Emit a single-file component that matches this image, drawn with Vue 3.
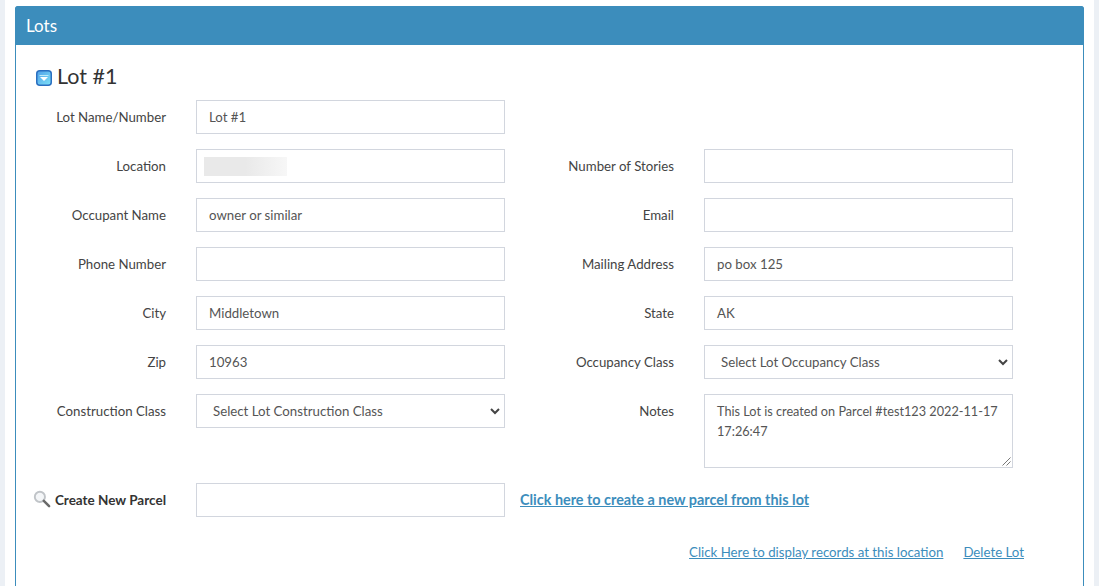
<script setup>
const rows = [
  { left: { label: 'Lot Name/Number', value: 'Lot #1' } },
  { left: { label: 'Location', blur: true }, right: { label: 'Number of Stories', value: '' } },
  { left: { label: 'Occupant Name', value: 'owner or similar' }, right: { label: 'Email', value: '' } },
  { left: { label: 'Phone Number', value: '' }, right: { label: 'Mailing Address', value: 'po box 125' } },
  { left: { label: 'City', value: 'Middletown' }, right: { label: 'State', value: 'AK' } },
  { left: { label: 'Zip', value: '10963' }, right: { label: 'Occupancy Class', select: 'Select Lot Occupancy Class' } },
]
</script>

<template>
  <div class="page">
    <section class="panel">
      <header class="panel-head">Lots</header>
      <div class="panel-body">
        <h2 class="lot-title">
          <svg class="toggle" width="16" height="16" viewBox="0 0 16 16" aria-hidden="true">
            <defs>
              <linearGradient id="tg" x1="0" y1="0" x2="1" y2="1">
                <stop offset="0" stop-color="#4f9fe8" />
                <stop offset="1" stop-color="#7fe3f7" />
              </linearGradient>
            </defs>
            <rect x="0.75" y="0.75" width="14.5" height="14.5" rx="3" fill="url(#tg)" stroke="#2a6fc0" stroke-width="1.5" />
            <path d="M3.5 5.5h9" stroke="#bfeaf8" stroke-width="1" />
            <path d="M4 7h8L8 11z" fill="#fff" />
          </svg>
          <span class="title-text">Lot #1</span>
        </h2>
        <div class="form-grid">
          <template v-for="(row, i) in rows" :key="i">
            <label class="lbl">{{ row.left.label }}</label>
            <div class="box">
              <span v-if="row.left.blur" class="blur"></span>
              <template v-else>{{ row.left.value }}</template>
            </div>
            <template v-if="row.right">
              <label class="lbl">{{ row.right.label }}</label>
              <div v-if="row.right.select" class="box sel">
                {{ row.right.select }}
                <svg class="chev" width="10" height="7" viewBox="0 0 10 7"><path d="M1 1l4 4 4-4" fill="none" stroke="#444" stroke-width="2" /></svg>
              </div>
              <div v-else class="box">{{ row.right.value }}</div>
            </template>
            <template v-else><span></span><span></span></template>
          </template>

          <label class="lbl">Construction Class</label>
          <div class="box sel">
            Select Lot Construction Class
            <svg class="chev" width="10" height="7" viewBox="0 0 10 7"><path d="M1 1l4 4 4-4" fill="none" stroke="#444" stroke-width="2" /></svg>
          </div>
          <label class="lbl lbl-top">Notes</label>
          <div class="box notes">
            This Lot is created on Parcel #test123 2022-11-17 17:26:47
            <svg class="grip" width="9" height="9" viewBox="0 0 9 9"><path d="M0.5 8.5l8-8M4.5 8.5l4-4" stroke="#555" stroke-width="0.8" fill="none" /></svg>
          </div>

          <label class="lbl strong">
            <svg class="mag" width="18" height="18" viewBox="0 0 17 17" aria-hidden="true">
              <circle cx="6.5" cy="6.5" r="4.8" fill="#f4f6f8" stroke="#c0c4c8" stroke-width="1.8" />
              <path d="M10.2 10.2l5 5" stroke="#6a6a6a" stroke-width="2.4" stroke-linecap="round" />
            </svg>
            Create New Parcel
          </label>
          <div class="box"></div>
          <a class="create-link" href="#">Click here to create a new parcel from this lot</a>
        </div>
        <div class="actions">
          <a href="#">Click Here to display records at this location</a>
          <a href="#">Delete Lot</a>
        </div>
      </div>
    </section>
  </div>
</template>

<style scoped>
.page {
  box-sizing: border-box;
  height: 586px;
  overflow: hidden;
  margin: 0 5px;
  padding: 6px 10px 0;
  background: #fff;
  font-family: Lato, "Noto Sans", sans-serif;
  font-size: 13.25px;
  color: #444;
}
.panel {
  height: 600px;
  border: 1px solid #3c8dbc;
  border-radius: 3px 3px 0 0;
  box-sizing: border-box;
}
.panel-head {
  height: 39px;
  margin: -1px -1px 0;
  padding: 0 11px;
  line-height: 40px;
  background: #3c8dbc;
  border-radius: 3px 3px 0 0;
  color: #fff;
  font-size: 17px;
}
.panel-body {
  padding: 18px 0 0 19px;
}
.lot-title {
  display: flex;
  align-items: center;
  gap: 5px;
  height: 27px;
  margin: 0 0 10px 1px;
  font-size: 21.5px;
  font-weight: 400;
  color: #333;
}
.title-text {
  margin-bottom: 2px;
}
.toggle {
  margin-top: 3px;
}
.form-grid {
  display: grid;
  grid-template-columns: 131px 309px 139px 309px;
  column-gap: 30px;
  row-gap: 15px;
}
.lbl {
  display: flex;
  align-items: center;
  justify-content: flex-end;
  height: 34px;
  color: #444;
  white-space: nowrap;
}
.lbl-top {
  align-self: start;
}
.strong {
  font-size: 13.5px;
  font-weight: 700;
  color: #333;
  gap: 4px;
}
.mag {
  flex-shrink: 0;
  margin-top: -2px;
}
.box {
  box-sizing: border-box;
  position: relative;
  display: flex;
  align-items: center;
  height: 34px;
  padding: 0 12px;
  background: #fff;
  border: 1px solid #d2d6de;
  color: #555;
  white-space: nowrap;
}
.sel {
  padding-left: 16px;
}
.chev {
  position: absolute;
  right: 4px;
  top: 13px;
}
.notes {
  height: 74px;
  align-items: flex-start;
  padding: 6px 12px;
  font-size: 12.7px;
  line-height: 20px;
  white-space: normal;
}
.grip {
  position: absolute;
  right: 1px;
  bottom: 1px;
}
.blur {
  position: absolute;
  left: 7px;
  top: 7px;
  width: 83px;
  height: 19px;
  background: linear-gradient(90deg, #e9e9e9 0%, #e9e9e9 50%, #f7f7f7 100%);
}
.create-link {
  grid-column: 3 / 5;
  align-self: center;
  margin: -2px 0 0 -15px;
  font-size: 14.4px;
  color: #3c8dbc;
  font-weight: 700;
  text-decoration: underline;
}
.actions {
  display: flex;
  justify-content: flex-end;
  gap: 20px;
  margin-top: 27px;
  padding-right: 59px;
}
.actions a {
  color: #3c8dbc;
  text-decoration: underline;
}
</style>

<style>
body {
  background: #ecf0f5;
}
</style>
